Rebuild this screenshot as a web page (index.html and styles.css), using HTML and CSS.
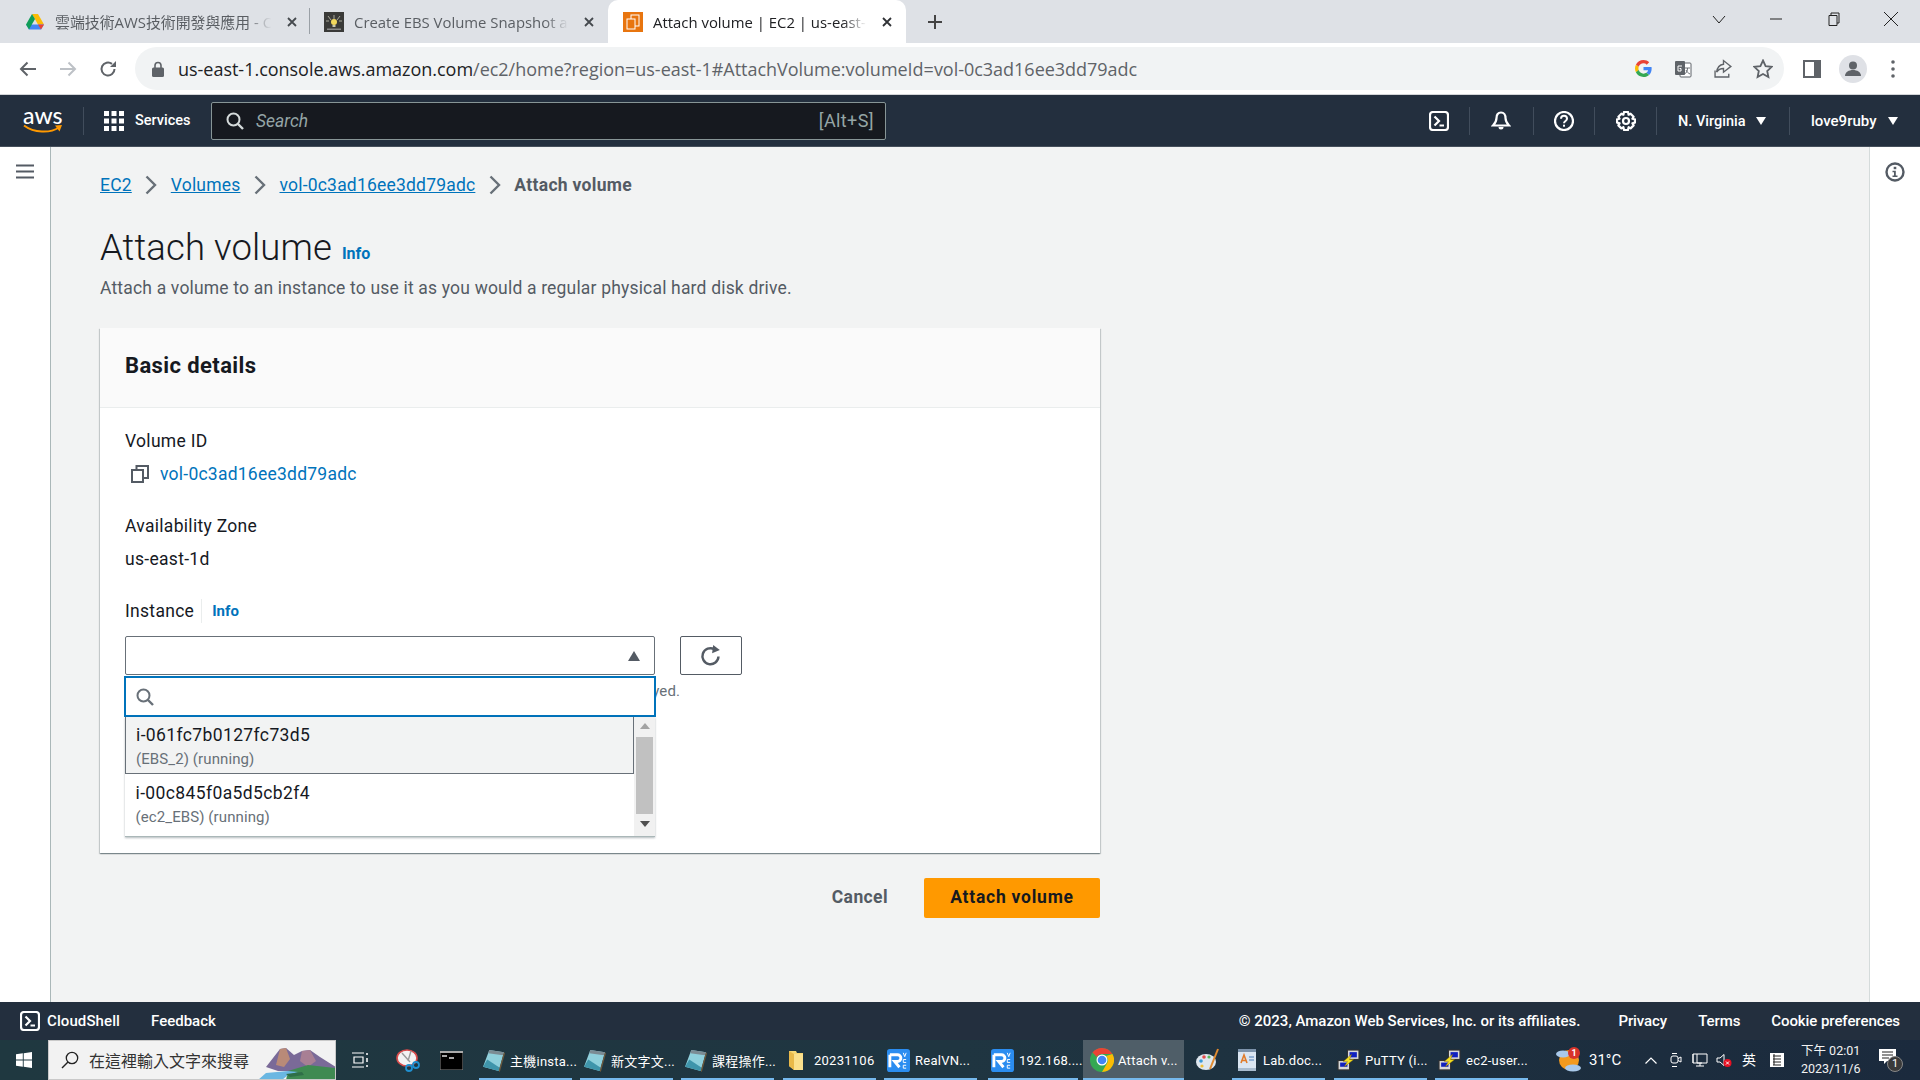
FILE: index.html
```html
<!DOCTYPE html>
<html lang="zh-Hant">
<head>
<meta charset="utf-8">
<title>Attach volume | EC2 | us-east-1</title>
<link rel="stylesheet" href="styles.css">
</head>
<body>
<svg class="defs">
  <symbol id="notepad" viewBox="0 0 22 22">
    <polygon points="7,1 21,3 16,21 1,17" fill="#8fd0dc"/>
    <polygon points="7,1 21,3 20,6 6,4" fill="#7c8c94"/>
    <polygon points="1,17 16,21 17,18 5,10" fill="#3f95ab"/>
    <polygon points="21,3 22,4 17,22 16,21" fill="#6f5a3c"/>
  </symbol>
  <symbol id="vnc" viewBox="0 0 24 24">
    <rect width="24" height="24" rx="3" fill="#2b8df0"/>
    <path d="M3 6h8a3.500 3.500 0 0 1 0 7H8l5 6M3 6v13" fill="none" stroke="#fff" stroke-width="3"/>
    <path d="M17 4l1.500 4 1.500-4M20 11h-3v3h3M20 17h-3v3h3" fill="none" stroke="#fff" stroke-width="1"/>
  </symbol>
  <symbol id="putty" viewBox="0 0 22 22">
    <rect x="10" y="1" width="11" height="9" fill="#d9d9d9" stroke="#333"/>
    <rect x="12" y="3" width="7" height="5" fill="#1020c0"/>
    <rect x="1" y="11" width="11" height="9" fill="#d9d9d9" stroke="#333"/>
    <rect x="3" y="13" width="7" height="4" fill="#1020c0"/>
    <polygon points="14,5 6,12 10,12 7,17 16,10 12,10" fill="#f5e020" stroke="#806000" stroke-width=".4"/>
  </symbol>
  <symbol id="shell" viewBox="0 0 20 20">
    <rect x="1" y="1" width="18" height="18" rx="3" fill="none" stroke="#fff" stroke-width="2.200"/>
    <path d="M5.500 5.500l4.500 4.500-4.500 4.500M10.500 14.500h4.500" fill="none" stroke="#fff" stroke-width="2.200"/>
  </symbol>
</svg>

<div class="tabstrip">
  <div class="tab tab-first">
    <svg class="favicon" viewBox="0 0 18 16"><polygon points="6,0 12,0 18,10.500 12,10.500" fill="#fbbc05"/><polygon points="3,15.500 0,10.500 18,10.500 15,15.500" fill="#4285f4"/><polygon points="6,0 9,5 3,15.500 0,10.500" fill="#0f9d58"/><polygon points="12,10.500 18,10.500 15,15.500" fill="#ea4335"/></svg>
    <span class="tab-title">雲端技術AWS技術開發與應用 - C</span>
    <svg class="tab-x" viewBox="0 0 10 10"><path d="M1 1l8 8M9 1l-8 8"/></svg>
  </div>
  <div class="tab-sep"></div>
  <div class="tab tab-second">
    <svg class="favicon fav-kb" viewBox="0 0 20 20"><rect width="20" height="20" fill="#3a3a38"/><path d="M10 3v4M4 4l3 4M16 4l-3 4M2 9h3M15 9h3" stroke="#a8a89a" stroke-width="1"/><circle cx="10" cy="10" r="3" fill="#f1d75c"/><rect x="8.500" y="13" width="3" height="2" fill="#c8c8b0"/><rect x="3" y="16.500" width="14" height="1.500" fill="#888"/></svg>
    <span class="tab-title">Create EBS Volume Snapshot a</span>
    <svg class="tab-x" viewBox="0 0 10 10"><path d="M1 1l8 8M9 1l-8 8"/></svg>
  </div>
  <div class="tab tab-active">
    <svg class="favicon fav-ec2" viewBox="0 0 20 20"><rect width="20" height="20" fill="#e8750f"/><rect x="8" y="3" width="8" height="11" fill="none" stroke="#fff" stroke-width="1"/><rect x="4" y="7" width="8" height="10" fill="#e8750f" stroke="#fff" stroke-width="1"/></svg>
    <span class="tab-title">Attach volume | EC2 | us-east-1</span>
    <svg class="tab-x tab-x-dark" viewBox="0 0 10 10"><path d="M1 1l8 8M9 1l-8 8"/></svg>
  </div>
  <svg class="newtab" viewBox="0 0 14 14"><path d="M7 0v14M0 7h14"/></svg>
  <div class="winctl">
    <svg class="win-ico" viewBox="0 0 14 14"><path d="M1 4l6 7 6-7"/></svg>
    <svg class="win-ico" viewBox="0 0 14 14"><path d="M1 7h12"/></svg>
    <svg class="win-ico" viewBox="0 0 14 14"><path d="M2 3.500h8v10H2zM4 3.500V1h8v10h-2"/></svg>
    <svg class="win-ico win-close" viewBox="0 0 14 14"><path d="M0 0l14 14M14 0L0 14"/></svg>
  </div>
</div>

<div class="toolbar">
  <svg class="tb-ico" viewBox="0 0 18 18"><path d="M17 9H2M8.500 2.500L2 9l6.500 6.500"/></svg>
  <svg class="tb-ico tb-dim" viewBox="0 0 18 18"><path d="M1 9h15M9.500 2.500L16 9l-6.500 6.500"/></svg>
  <svg class="tb-ico" viewBox="0 0 18 18"><path d="M15.500 9A6.500 6.500 0 1 1 13 3.900"/><path class="tb-fill" d="M17 1v6h-6z"/></svg>
  <div class="omnibox">
    <svg class="lock" viewBox="0 0 12 16"><path d="M3 7V4.500a3 3 0 0 1 6 0V7" fill="none" stroke="#5f6368" stroke-width="1.600"/><rect y="6.500" width="12" height="9.500" rx="1.500" fill="#5f6368"/></svg>
    <span class="url"><span class="url-host">us-east-1.console.aws.amazon.com</span>/ec2/home?region=us-east-1#AttachVolume:volumeId=vol-0c3ad16ee3dd79adc</span>
    <svg class="omni-g" viewBox="0 0 48 48"><path fill="#EA4335" d="M24 9.500c3.540 0 6.710 1.220 9.210 3.600l6.850-6.850C35.900 2.380 30.470 0 24 0 14.620 0 6.510 5.380 2.560 13.220l7.980 6.190C12.430 13.720 17.740 9.500 24 9.500z"/><path fill="#4285F4" d="M46.980 24.550c0-1.570-.15-3.090-.38-4.550H24v9.020h12.940c-.58 2.960-2.260 5.480-4.780 7.180l7.730 6c4.510-4.180 7.090-10.360 7.090-17.650z"/><path fill="#FBBC05" d="M10.530 28.590c-.48-1.450-.76-2.990-.76-4.590s.27-3.140.76-4.590l-7.980-6.190C.92 16.460 0 20.120 0 24c0 3.880.92 7.540 2.560 10.780l7.970-6.190z"/><path fill="#34A853" d="M24 48c6.480 0 11.930-2.130 15.890-5.810l-7.730-6c-2.150 1.450-4.920 2.300-8.160 2.300-6.260 0-11.570-4.220-13.470-9.910l-7.980 6.190C6.510 42.620 14.620 48 24 48z"/></svg>
    <svg class="omni-trans" viewBox="0 0 18 18"><rect x="6" y="3" width="11" height="14" rx="1" fill="#fff" stroke="#5f6368"/><rect x="1" y="1" width="10" height="14" rx="1" fill="#5f6368"/><path d="M8 6H4v5h3V8.500H5.500" fill="none" stroke="#fff"/><path d="M11 8h5M13.500 8c0 3-1 5-3 6M12 10c1 2 2 3 4 4" fill="none" stroke="#5f6368" stroke-width=".9"/></svg>
    <svg class="omni-share" viewBox="0 0 18 18"><path d="M9 5V1.500l7 5.500-7 5.500V9c-3 0-5 1-6.500 3.500C3 8.500 5 5.500 9 5zM1 11v6h13v-3"/></svg>
    <svg class="omni-star" viewBox="0 0 20 20"><path d="M10 1.500l2.600 5.600 6.100.7-4.500 4.200 1.200 6L10 15l-5.400 3 1.200-6L1.300 7.800l6.100-.7z"/></svg>
  </div>
  <svg class="side-panel" viewBox="0 0 18 18"><rect x="1" y="1" width="16" height="16" fill="none" stroke="#5f6368" stroke-width="2"/><rect x="11" y="1" width="6" height="16" fill="#5f6368"/></svg>
  <svg class="avatar" viewBox="0 0 28 28"><circle cx="14" cy="14" r="14" fill="#dfe1e6"/><circle cx="14" cy="10.500" r="4" fill="#5f6368"/><path d="M6 21c0-4 4-6 8-6s8 2 8 6z" fill="#5f6368"/></svg>
  <svg class="dots" viewBox="0 0 4 18"><circle cx="2" cy="2" r="1.800"/><circle cx="2" cy="9" r="1.800"/><circle cx="2" cy="16" r="1.800"/></svg>
</div>

<div class="nav">
  <div class="nav-logo">
    <span class="aws-text">aws</span>
    <svg class="aws-smile" viewBox="0 0 40 11"><path d="M1 1.500c10 7.500 26 8 35 2" fill="none" stroke="#f90" stroke-width="2"/><path d="M32 1.500l7-.5-2.500 6.500z" fill="#f90"/></svg>
  </div>
  <div class="nav-services">
    <svg class="grid-ico" viewBox="0 0 20 20"><g fill="#fff"><rect width="5" height="5"/><rect x="7.500" width="5" height="5"/><rect x="15" width="5" height="5"/><rect y="7.500" width="5" height="5"/><rect x="7.500" y="7.500" width="5" height="5"/><rect x="15" y="7.500" width="5" height="5"/><rect y="15" width="5" height="5"/><rect x="7.500" y="15" width="5" height="5"/><rect x="15" y="15" width="5" height="5"/></g></svg>
    <span class="services-label">Services</span>
  </div>
  <div class="nav-search">
    <svg class="search-ico" viewBox="0 0 18 18"><circle cx="7.500" cy="7.500" r="6" fill="none" stroke="#d5dbdb" stroke-width="2"/><path d="M12 12l5 5" stroke="#d5dbdb" stroke-width="2.400"/></svg>
    <span class="search-ph">Search</span>
    <span class="search-key">[Alt+S]</span>
  </div>
  <div class="nav-spacer"></div>
  <div class="nav-cell cell-a"><svg class="nav-ico" viewBox="0 0 20 20"><use href="#shell"/></svg></div>
  <div class="nav-cell cell-b"><svg class="nav-ico" viewBox="0 0 20 20"><path d="M10 1.500c-3 0-4.500 2.500-4.500 5.500 0 3.500-1 5-3.500 7.500h16c-2.500-2.500-3.500-4-3.500-7.500 0-3-1.500-5.500-4.500-5.500z" fill="none" stroke="#fff" stroke-width="2.200"/><path d="M7.500 16a2.500 2.500 0 0 0 5 0z" fill="#fff"/></svg></div>
  <div class="nav-cell cell-c"><svg class="nav-ico" viewBox="0 0 20 20"><circle cx="10" cy="10" r="9" fill="none" stroke="#fff" stroke-width="2.200"/><path d="M7 7.800c0-4 6-4 6 0 0 2.200-3 2.200-3 4.500" fill="none" stroke="#fff" stroke-width="2"/><rect x="9" y="13.700" width="2" height="2" fill="#fff"/></svg></div>
  <div class="nav-cell cell-d"><svg class="nav-ico" viewBox="0 0 20 20"><circle cx="10" cy="10" r="3" fill="none" stroke="#fff" stroke-width="2.200"/><path d="M8 1h4l.6 2.700 2-1 3 3-1.200 2L19 8.400v3.200l-2.600.7 1.200 2.100-3 3-2-1.200L12 19H8l-.6-2.800-2 1.200-3-3 1.200-2.100L1 11.600V8.400l2.600-.7-1.200-2 3-3 2 1z" fill="none" stroke="#fff" stroke-width="2.200" stroke-linejoin="round"/></svg></div>
  <div class="nav-text nav-region"><span>N. Virginia</span><i class="caret"></i></div>
  <div class="nav-text nav-user"><span>love9ruby</span><i class="caret"></i></div>
</div>

<div class="main">
  <aside class="rail rail-left">
    <svg class="burger" viewBox="0 0 18 15"><path d="M0 1.500h18M0 7.500h18M0 13.500h18"/></svg>
  </aside>
  <main class="content">
    <nav class="crumbs">
      <a class="link">EC2</a><svg class="chev" viewBox="0 0 12 20"><path d="M1.500 1.500L10 10l-8.500 8.500"/></svg>
      <a class="link">Volumes</a><svg class="chev" viewBox="0 0 12 20"><path d="M1.500 1.500L10 10l-8.500 8.500"/></svg>
      <a class="link">vol-0c3ad16ee3dd79adc</a><svg class="chev" viewBox="0 0 12 20"><path d="M1.500 1.500L10 10l-8.500 8.500"/></svg>
      <span class="crumb-now">Attach volume</span>
    </nav>
    <div class="title-row">
      <h1 class="title">Attach volume</h1><span class="info info-title">Info</span>
    </div>
    <p class="subtitle">Attach a volume to an instance to use it as you would a regular physical hard disk drive.</p>
    <section class="card">
      <header class="card-head"><h2 class="card-title">Basic details</h2></header>
      <div class="card-body">
        <div class="label">Volume ID</div>
        <div class="vol-row">
          <svg class="copy" viewBox="0 0 18 18"><rect x="1" y="5" width="11" height="12" fill="none" stroke="#545b64" stroke-width="2"/><path d="M5.500 4.500V1H17v12h-4.500" fill="none" stroke="#545b64" stroke-width="2"/></svg>
          <span class="vol-link">vol-0c3ad16ee3dd79adc</span>
        </div>
        <div class="label label-az">Availability Zone</div>
        <div class="value">us-east-1d</div>
        <div class="inst-head"><span class="label">Instance</span><span class="info info-inst">Info</span></div>
        <div class="field">
          <div class="field-row">
            <div class="select"><i class="caret-up"></i></div>
            <button class="refresh" type="button"><svg class="refresh-ico" viewBox="0 0 20 20"><path d="M16.800 10.500A7.300 7.300 0 1 1 13 3.800"/><path class="refresh-tip" d="M12 0l6 4.500L11 7.500z"/></svg></button>
          </div>
          <div class="hint">Only instances in the same Availability Zone as the selected volume are displayed.</div>
          <div class="dropdown">
            <div class="dd-search"><svg class="dd-mag" viewBox="0 0 18 18"><circle cx="7.500" cy="7.500" r="6" fill="none" stroke="#687078" stroke-width="2"/><path d="M12 12l5 5" stroke="#687078" stroke-width="2.400"/></svg></div>
            <div class="dd-list">
              <div class="dd-options">
                <div class="opt opt-hover"><div class="opt-id">i-061fc7b0127fc73d5</div><div class="opt-sub">(EBS_2) (running)</div></div>
                <div class="opt"><div class="opt-id">i-00c845f0a5d5cb2f4</div><div class="opt-sub">(ec2_EBS) (running)</div></div>
              </div>
              <div class="scroll">
                <i class="sc-up"></i>
                <i class="sc-thumb"></i>
                <i class="sc-down"></i>
              </div>
            </div>
          </div>
        </div>
      </div>
    </section>
    <div class="actions">
      <span class="cancel">Cancel</span>
      <button class="primary" type="button">Attach volume</button>
    </div>
  </main>
  <aside class="rail rail-right">
    <svg class="info-ico" viewBox="0 0 20 20"><circle cx="10" cy="10" r="8.500" fill="none" stroke="#545b64" stroke-width="2.400"/><rect x="8.700" y="4.800" width="2.600" height="2.400" fill="#545b64"/><path d="M7.500 8.800h3.300v4.700h1.700v1.500h-5v-1.500h1.500v-3.200H7.500z" fill="#545b64"/></svg>
  </aside>
</div>

<footer class="foot">
  <svg class="foot-shell" viewBox="0 0 20 20"><use href="#shell"/></svg>
  <span class="foot-cs">CloudShell</span>
  <span class="foot-fb">Feedback</span>
  <span class="foot-copy">© 2023, Amazon Web Services, Inc. or its affiliates.</span>
  <span class="foot-pr">Privacy</span>
  <span class="foot-te">Terms</span>
  <span class="foot-co">Cookie preferences</span>
</footer>

<div class="taskbar">
  <div class="tk-start">
    <svg class="tk-win" viewBox="0 0 16 16"><path d="M0 2.300l6.800-1v6.300H0zM7.700 1.200L16 0v7.600H7.700zM0 8.400h6.800v6.300l-6.800-1zM7.700 8.400H16V16l-8.300-1.200z" fill="#fff"/></svg>
  </div>
  <div class="tk-search">
    <svg class="tk-mag" viewBox="0 0 18 18"><circle cx="11" cy="7" r="5.700" fill="none" stroke="#222" stroke-width="1.300"/><path d="M7 11l-6 6" stroke="#222" stroke-width="1.500"/></svg>
    <span class="tk-search-text">在這裡輸入文字來搜尋</span>
    <svg class="tk-scene" viewBox="0 0 78 39" preserveAspectRatio="none">
      <polygon points="8,26 22,8 28,7 36,14 44,10 52,9 62,16 78,26 78,30 20,30" fill="#7a6a98"/>
      <polygon points="22,8 28,7 32,18 26,26 18,24" fill="#b98a78"/>
      <polygon points="44,10 52,9 58,20 50,26 42,20" fill="#a87f94"/>
      <polygon points="30,30 50,24 78,27 78,39 28,39" fill="#3f8a52"/>
      <polygon points="0,39 8,32 30,30 40,31 30,34 24,39" fill="#6ab7e2"/>
      <polygon points="28,33 44,31 46,34 32,36" fill="#2f6f48"/>
    </svg>
  </div>
  <div class="tk-icon"><svg class="ti-view" viewBox="0 0 16 16"><path d="M0 1h12M0 15h12M2 5h9v6H2z" fill="none" stroke="#fff" stroke-width="1.200"/><path d="M15 1v2M15 6v4M15 13v2" stroke="#fff" stroke-width="1.500"/></svg></div>
  <div class="tk-icon"><svg class="ti-snip" viewBox="0 0 24 24"><ellipse cx="11" cy="10" rx="10" ry="8" fill="#f3f3f3" stroke="#d94b4b" stroke-width="1.600"/><path d="M15 3l-3 10M6 5l8 9" stroke="#9a9a9a" stroke-width="1.400"/><circle cx="13" cy="20" r="3" fill="none" stroke="#1f8fd0" stroke-width="1.800"/><circle cx="20" cy="17" r="3" fill="none" stroke="#1f8fd0" stroke-width="1.800"/></svg></div>
  <div class="tk-icon tk-cmd"><svg class="ti-cmd" viewBox="0 0 23 19"><rect width="23" height="19" fill="#000" stroke="#888"/><rect y="0" width="23" height="2" fill="#aaa"/><path d="M2 5h5M9 7h5" stroke="#ddd" stroke-width="1.500"/></svg></div>
  <div class="tk-btn"><svg class="ti-app" viewBox="0 0 22 22"><use href="#notepad"/></svg><span class="tk-label">主機insta...</span></div>
  <div class="tk-btn"><svg class="ti-app" viewBox="0 0 22 22"><use href="#notepad"/></svg><span class="tk-label">新文字文...</span></div>
  <div class="tk-btn"><svg class="ti-app" viewBox="0 0 22 22"><use href="#notepad"/></svg><span class="tk-label">課程操作...</span></div>
  <div class="tk-btn tk-folder"><svg class="ti-folder" viewBox="0 0 15 20"><path d="M0 1h7l1 2h6v17H5L0 16z" fill="#f7d774"/><path d="M5 4h9v16H5z" fill="#fbe08c"/><path d="M0 1l5 3v16l-5-4z" fill="#e9b949"/></svg><span class="tk-label">20231106</span></div>
  <div class="tk-btn"><svg class="ti-app" viewBox="0 0 24 24"><use href="#vnc"/></svg><span class="tk-label">RealVN...</span></div>
  <div class="tk-btn tk-vnc2"><svg class="ti-app" viewBox="0 0 24 24"><use href="#vnc"/></svg><span class="tk-label">192.168....</span></div>
  <div class="tk-btn tk-chrome">
    <svg class="ti-chrome" viewBox="0 0 24 24"><circle cx="12" cy="12" r="12" fill="#34a853"/><path d="M12 0a12 12 0 0 1 10.400 6H12a6 6 0 0 0-5.200 3L2.500 4.500A12 12 0 0 1 12 0z" fill="#ea4335"/><path d="M22.400 6A12 12 0 0 1 12 24l5.200-9A6 6 0 0 0 16 8z" fill="#fbbc05"/><circle cx="12" cy="12" r="5.500" fill="#fff"/><circle cx="12" cy="12" r="4.300" fill="#4285f4"/></svg>
    <span class="tk-label">Attach v...</span>
  </div>
  <div class="tk-icon"><svg class="ti-paint" viewBox="0 0 24 24"><ellipse cx="10" cy="14" rx="10" ry="8" fill="#dfe7ef"/><circle cx="5" cy="13" r="1.800" fill="#3a9ad9"/><circle cx="8" cy="9" r="1.800" fill="#e34d4d"/><circle cx="13" cy="9" r="1.600" fill="#5cb85c"/><circle cx="6" cy="18" r="1.600" fill="#f2c037"/><path d="M22 1l-8 20" stroke="#e08a2e" stroke-width="2"/></svg></div>
  <div class="tk-btn tk-lab"><svg class="ti-lab" viewBox="0 0 18 24"><rect y="1" width="18" height="22" fill="#dbe6f2"/><rect y="1" width="18" height="3" fill="#7c93ab"/><rect y="20" width="18" height="3" fill="#a9bccf"/><path d="M3 15l3-8 3 8M4 12.500h4" fill="none" stroke="#e07b2a" stroke-width="1.600"/><path d="M11 9h5M11 12h5" stroke="#4a7db8" stroke-width="1.200"/></svg><span class="tk-label">Lab.doc...</span></div>
  <div class="tk-btn"><svg class="ti-app" viewBox="0 0 22 22"><use href="#putty"/></svg><span class="tk-label">PuTTY (i...</span></div>
  <div class="tk-btn"><svg class="ti-app" viewBox="0 0 22 22"><use href="#putty"/></svg><span class="tk-label">ec2-user...</span></div>
  <div class="tray">
    <div class="tr-weather">
      <svg class="tr-sun" viewBox="0 0 26 26"><circle cx="13" cy="13" r="10" fill="#f39a1e"/><ellipse cx="7" cy="7" rx="7" ry="3.500" fill="#a9c9ea"/><ellipse cx="17" cy="21" rx="8" ry="3.500" fill="#a9c9ea"/><circle cx="18" cy="6" r="6" fill="#d8342a"/></svg>
      <span class="tr-badge">1</span>
    </div>
    <span class="tr-temp">31°C</span>
    <svg class="tr-chev" viewBox="0 0 12 7"><path d="M.5 6.500L6 1l5.500 5.500"/></svg>
    <svg class="tr-meet" viewBox="0 0 12 16"><rect x="1" y="4" width="7" height="7" rx="2" fill="none" stroke="#fff"/><path d="M8 6.500l3-1.500v5l-3-1.500M2 1.500h5M2 14.500h5" fill="none" stroke="#fff"/></svg>
    <svg class="tr-net" viewBox="0 0 16 14"><path d="M1 1h14v9H1zM1 1v9M5 1v9h5M8 10v3M4 13h8" fill="none" stroke="#fff"/></svg>
    <span class="tr-sound"><svg class="tr-spk" viewBox="0 0 16 14"><path d="M1 5h3l4-3.500v11L4 9H1z" fill="none" stroke="#fff"/><circle cx="11.500" cy="10" r="4" fill="#e81123"/><path d="M10 8.500l3 3M13 8.500l-3 3" stroke="#fff"/></svg></span>
    <span class="tr-ime">英</span>
    <svg class="tr-kb" viewBox="0 0 14 14"><rect width="14" height="14" fill="#fff"/><path d="M3 3h8M3 6h8M3 9h8M3 12h8M4 1v11" stroke="#222" stroke-width="1"/></svg>
    <div class="tr-clock"><div>下午 02:01</div><div>2023/11/6</div></div>
    <div class="tr-note">
      <svg class="tr-msg" viewBox="0 0 17 16"><path d="M0 0h17v12H8l-3 3v-3H0z" fill="#fff"/><path d="M3 3h11M3 6h11M3 9h7" stroke="#222"/></svg>
      <span class="tr-count">1</span>
    </div>
  </div>
</div>
</body>
</html>
```

FILE: styles.css
```css
* { box-sizing: border-box; }
html, body { margin: 0; height: 1080px; overflow: hidden; }
body {
  width: 1920px;
  display: flex;
  flex-direction: column;
  font-family: Roboto, "Noto Sans CJK TC", sans-serif;
  color: #16191f;
  background: #f2f3f3;
}
.defs { display: none; }

/* chrome tab strip */
.tabstrip { height: 43px; background: #dee1e6; display: flex; align-items: stretch; flex: none; }
.tab {
  width: 298px; display: flex; align-items: center; flex: none;
  font: 14.9px "Open Sans", "Noto Sans CJK TC", sans-serif; color: #5a5e63;
}
.tab-first { margin-left: 11px; padding-left: 15px; padding-right: 12px; }
.tab-sep { width: 1px; height: 26px; background: #9aa0a6; margin-top: 8px; flex: none; }
.tab-second { padding-left: 14px; padding-right: 14px; }
.tab-active { background: #fff; color: #202124; padding-left: 15px; padding-right: 14px; border-radius: 10px 10px 0 0; }
.favicon { width: 18px; height: 16px; flex: none; margin-right: 11px; }
.fav-kb, .fav-ec2 { width: 20px; height: 20px; margin-right: 10px; }
.tab-title {
  flex: 1; min-width: 0; white-space: nowrap;
  -webkit-mask-image: linear-gradient(to right, #000 87%, transparent 98%);
  mask-image: linear-gradient(to right, #000 87%, transparent 98%);
}
.tab-x { width: 10px; height: 10px; flex: none; margin-left: 11px; fill: none; stroke: #45494e; stroke-width: 1.800; }
.tab-x-dark { stroke: #303236; }
.newtab { width: 14px; height: 14px; margin-left: 22px; align-self: center; fill: none; stroke: #444; stroke-width: 2; flex: none; }
.winctl { margin-left: auto; display: flex; align-items: center; height: 37px; padding-right: 22px; gap: 43.5px; }
.win-ico { width: 14px; height: 14px; fill: none; stroke: #222; stroke-width: 1; }
.win-close { width: 14px; height: 14px; }

/* chrome toolbar */
.toolbar { height: 52px; background: #fff; border-bottom: 1px solid #d3d5d8; display: flex; align-items: center; flex: none; padding-left: 19px; }
.tb-ico { width: 18px; height: 18px; margin-right: 22px; fill: none; stroke: #5f6368; stroke-width: 2; flex: none; }
.tb-dim { stroke: #bdc1c6; }
.tb-fill { fill: #5f6368; stroke: none; }
.omnibox {
  width: 1649px; height: 43px; margin-left: -4px; background: #f1f3f4; border-radius: 22px;
  display: flex; align-items: center; padding-left: 17px; flex: none;
}
.lock { width: 12px; height: 16px; flex: none; }
.url { margin-left: 14px; font: 18px "Open Sans", sans-serif; letter-spacing: -.02px; color: #5f6368; white-space: nowrap; flex: none; width: 1456.5px; }
.url-host { color: #202124; }
.omni-g { width: 17px; height: 17px; flex: none; }
.omni-trans { width: 18px; height: 18px; flex: none; margin-left: 22.5px; }
.omni-share { width: 19px; height: 19px; flex: none; margin-left: 22px; fill: none; stroke: #5f6368; stroke-width: 1.300; }
.omni-star { width: 20px; height: 20px; flex: none; margin-left: 20px; fill: none; stroke: #5f6368; stroke-width: 1.800; }
.side-panel { width: 18px; height: 18px; margin-left: 19px; flex: none; }
.avatar { width: 28px; height: 28px; margin-left: 18px; flex: none; }
.dots { width: 4px; height: 18px; margin-left: 24px; fill: #5f6368; flex: none; }

/* aws nav */
.nav { height: 52px; background: #232f3e; border-bottom: 1px solid #454f5b; display: flex; align-items: center; flex: none; color: #fff; }
.nav-logo { width: 84px; height: 28px; border-right: 1px solid #414d5c; padding-left: 23px; display: flex; flex-direction: column; flex: none; }
.aws-text { font: 500 23px/17px Lato, sans-serif; color: #fff; height: 18px; }
.aws-smile { width: 40px; height: 11px; margin-top: -1px; }
.nav-services { width: 127px; display: flex; align-items: center; padding-left: 20px; flex: none; }
.grid-ico { width: 20px; height: 20px; flex: none; }
.services-label { margin-left: 11px; font: 500 14.5px Roboto, sans-serif; }
.nav-search {
  width: 675px; height: 38px; background: #16191f; border: 1px solid #879596; border-radius: 2px;
  display: flex; align-items: center; padding: 0 11px 0 14px; flex: none;
}
.search-ico { width: 18px; height: 18px; flex: none; }
.search-ph { margin-left: 12px; font: italic 17.5px Roboto, sans-serif; color: #95a5a6; }
.search-key { margin-left: auto; font: 18px Roboto, sans-serif; letter-spacing: .4px; color: #95a5a6; }
.nav-spacer { flex: 1; }
.nav-cell { height: 28px; border-right: 1px solid #414d5c; display: flex; align-items: center; justify-content: center; flex: none; }
.cell-a { width: 61px; }
.cell-b { width: 64px; padding-right: 2px; }
.cell-c { width: 61px; }
.cell-d { width: 62px; }
.nav-ico { width: 20px; height: 20px; }
.nav-text { height: 28px; display: flex; align-items: center; font: 500 14.5px Roboto, sans-serif; flex: none; padding: 1px 0 0 21px; }
.nav-region { width: 133px; border-right: 1px solid #414d5c; }
.nav-user { width: 130px; font-size: 15px; }
.caret { width: 0; height: 0; border-left: 5.5px solid transparent; border-right: 5.5px solid transparent; border-top: 8px solid #fff; margin-left: 11px; }
.nav-user .caret { margin-left: 12px; }

/* main */
.main { flex: 1; min-height: 0; display: flex; }
.rail { width: 51px; background: #fff; flex: none; }
.rail-left { border-right: 1px solid #aab7b8; padding: 17px 0 0 16px; }
.rail-right { border-left: 1px solid #d5dbdb; padding: 15px 0 0 15px; }
.burger { width: 18px; height: 15px; display: block; fill: none; stroke: #545b64; stroke-width: 2.200; }
.info-ico { width: 20px; height: 20px; display: block; }
.content { flex: 1; padding: 24px 0 0 49px; min-width: 0; }
.crumbs { height: 28px; display: flex; align-items: center; font-size: 17.5px; letter-spacing: .2px; }
.link { color: #0073bb; text-decoration: underline; }
.chev { width: 12px; height: 20px; margin: 0 13.5px; fill: none; stroke: #687078; stroke-width: 2.400; flex: none; }
.crumb-now { color: #545b64; font-weight: 700; letter-spacing: .3px; }
.title-row { margin-top: 24px; height: 48px; display: flex; align-items: center; }
.title { margin: 0; font: 300 36.5px Roboto, sans-serif; letter-spacing: .1px; color: #16191f; }
.info { color: #0073bb; font-weight: 700; font-size: 15px; }
.info-title { margin-left: 10px; margin-top: 13px; font-size: 16px; }
.subtitle { margin: 4px 0 0; font-size: 17.5px; line-height: 26px; letter-spacing: .18px; color: #545b64; height: 26px; }
.card { margin-top: 27px; width: 1000px; background: #fff; box-shadow: 0 1px 1px 0 rgba(0,28,36,.3), 1px 1px 1px 0 rgba(0,28,36,.15), -1px 1px 1px 0 rgba(0,28,36,.15); }
.card-head { height: 80px; background: #fafafa; border-bottom: 1px solid #eaeded; padding: 21px 25px 0; }
.card-title { margin: 0; font: 700 22px/34px Roboto, sans-serif; letter-spacing: .4px; }
.card-body { padding: 19px 25px 0; height: 445px; font-size: 17.5px; }
.label { line-height: 28px; height: 28px; color: #16191f; letter-spacing: .3px; }
.vol-row { display: flex; align-items: center; margin-top: 5px; height: 28px; padding-left: 6px; }
.copy { width: 18px; height: 18px; flex: none; }
.vol-link { color: #0073bb; margin-left: 11px; letter-spacing: .24px; }
.label-az { margin-top: 24px; }
.value { margin-top: 5px; line-height: 28px; height: 28px; letter-spacing: .3px; }
.inst-head { margin-top: 24px; display: flex; align-items: center; height: 28px; }
.info-inst { margin-left: 7px; padding-left: 10px; border-left: 1px solid #eaeded; line-height: 24px; }
.field { position: relative; margin-top: 11px; }
.field-row { display: flex; gap: 25px; height: 39px; }
.select { width: 530px; height: 39px; border: 1px solid #687078; border-radius: 2px; background: #fff; display: flex; align-items: center; justify-content: flex-end; padding-right: 14px; }
.caret-up { width: 0; height: 0; border-left: 6.5px solid transparent; border-right: 6.5px solid transparent; border-bottom: 10px solid #545b64; }
.refresh { width: 62px; height: 39px; border: 1px solid #545b64; border-radius: 2px; background: #fff; padding: 0; display: flex; align-items: center; justify-content: center; }
.refresh-ico { width: 22px; height: 22px; fill: none; stroke: #545b64; stroke-width: 2.200; }
.refresh-tip { fill: #545b64; stroke: none; }
.hint { margin-top: 6px; font-size: 15px; line-height: 20px; letter-spacing: .13px; color: #687078; white-space: nowrap; width: 556px; }
.dropdown { position: absolute; top: 40px; left: -1px; width: 532px; }
.dd-search { height: 41px; border: 2px solid #0073bb; background: #fff; display: flex; align-items: center; padding-left: 10px; }
.dd-mag { width: 18px; height: 18px; }
.dd-list { display: flex; margin: 0 1px; height: 120px; background: #fff; border-bottom: 1px solid #aab7b8; box-shadow: 0 1px 2px rgba(0,28,36,.3); }
.dd-options { flex: 1; min-width: 0; }
.opt { height: 60px; padding: 5px 0 0 10.5px; border: 1px solid transparent; border-left: 0; border-right: 0; }
.opt-hover { height: 57px; background: #f2f3f3; border: 1px solid #687078; border-top: 0; padding-top: 6px; padding-left: 10px; margin-bottom: 1px; }
.opt-id { font-size: 17.5px; line-height: 24px; letter-spacing: .38px; }
.opt-sub { font-size: 15px; line-height: 24px; letter-spacing: .1px; color: #687078; }
.scroll { width: 21px; flex: none; background: #f1f1f1; display: flex; flex-direction: column; align-items: center; padding: 6px 0 6px; }
.sc-up { width: 0; height: 0; border-left: 5px solid transparent; border-right: 5px solid transparent; border-bottom: 6px solid #a3a3a3; }
.sc-thumb { width: 17px; height: 77px; background: #c1c1c1; margin-top: 8px; }
.sc-down { width: 0; height: 0; border-left: 5px solid transparent; border-right: 5px solid transparent; border-top: 6px solid #505050; margin-top: 7px; }

.actions { width: 1000px; margin-top: 25px; display: flex; justify-content: flex-end; align-items: center; }
.cancel { font-weight: 700; font-size: 17.5px; letter-spacing: .4px; color: #545b64; margin: 0 36px 2px 0; }
.primary { width: 176px; height: 40px; border: 0; padding: 0 0 2px; background: #ff9900; color: #16191f; font: 700 17.5px Roboto, sans-serif; letter-spacing: .75px; border-radius: 2px; }

/* footer */
.foot { height: 38px; background: #232f3e; color: #fff; display: flex; align-items: center; font: 500 15px Roboto, sans-serif; flex: none; padding-left: 20px; }
.foot-shell { width: 20px; height: 20px; flex: none; }
.foot-cs { margin-left: 7px; letter-spacing: .1px; }
.foot-fb { margin-left: 31px; }
.foot-copy { margin-left: auto; }
.foot-pr { margin-left: 38px; letter-spacing: -.08px; }
.foot-te { margin-left: 31px; letter-spacing: -.08px; }
.foot-co { margin-left: 31px; margin-right: 20px; letter-spacing: -.08px; }

/* taskbar */
.taskbar { height: 40px; background: linear-gradient(to right, #1f3840, #1f3541 50%, #1b2a3d); display: flex; align-items: stretch; flex: none; color: #fff; font: 13px Roboto, "Noto Sans CJK TC", sans-serif; letter-spacing: .25px; }
.tk-start { width: 48px; display: flex; align-items: center; justify-content: center; flex: none; }
.tk-win { width: 16px; height: 16px; }
.tk-search { width: 288px; flex: none; background: #f2f2f2; border: 1px solid #c9c9c9; display: flex; align-items: center; color: #333; padding-left: 12px; overflow: hidden; letter-spacing: 0; }
.tk-mag { width: 18px; height: 18px; flex: none; }
.tk-search-text { margin-left: 10px; font: 16px "Noto Sans CJK TC", sans-serif; white-space: nowrap; width: 169px; flex: none; }
.tk-scene { width: 78px; height: 39px; flex: none; }
.tk-icon { width: 48px; flex: none; display: flex; align-items: center; justify-content: center; }
.tk-cmd { width: 39px; }
.ti-view { width: 16px; height: 16px; }
.ti-snip { width: 24px; height: 24px; }
.ti-cmd { width: 23px; height: 19px; }
.ti-paint { width: 24px; height: 24px; }
.tk-btn { width: 93px; margin-left: 8px; flex: none; display: flex; align-items: center; border-bottom: 2px solid #76b9ed; white-space: nowrap; padding-top: 2px; }
.ti-app { width: 23px; height: 23px; flex: none; margin: 0 5px 0 3px; }
.tk-folder { margin-left: 9px; }
.tk-folder .ti-folder { width: 15px; height: 20px; flex: none; margin: 0 10px 0 6px; }
.tk-vnc2 { width: 90px; margin-left: 11px; }
.tk-chrome { width: 101px; margin-left: 5px; background: #4f5e68; }
.ti-chrome { width: 24px; height: 24px; flex: none; margin: 0 4px 0 7px; }
.tk-lab { margin-left: 0; }
.ti-lab { width: 18px; height: 24px; flex: none; margin: 0 7px 0 6px; }
.tk-lab + .tk-btn { margin-left: 9px; }
.tk-label { flex: none; }
.tray { margin-left: 28px; display: flex; align-items: center; flex: 1; min-width: 0; letter-spacing: 0; }
.tr-weather { position: relative; width: 26px; height: 26px; flex: none; }
.tr-sun { width: 26px; height: 26px; display: block; }
.tr-badge { position: absolute; top: 0; right: 2px; font-size: 9px; line-height: 12px; width: 12px; text-align: center; font-weight: 700; }
.tr-temp { margin-left: 7px; font-size: 15px; width: 56px; flex: none; }
.tr-chev { width: 12px; height: 7px; fill: none; stroke: #fff; stroke-width: 1.200; flex: none; }
.tr-meet { width: 12px; height: 16px; margin-left: 13px; flex: none; }
.tr-net { width: 16px; height: 14px; margin-left: 10px; flex: none; }
.tr-sound { margin-left: 8px; flex: none; display: flex; }
.tr-spk { width: 16px; height: 14px; }
.tr-ime { margin-left: 10px; font-size: 14px; width: 15px; flex: none; line-height: 20px; }
.tr-kb { width: 14px; height: 14px; margin-left: 13px; flex: none; }
.tr-clock { margin-left: 17px; font-size: 12.5px; line-height: 18px; width: 68px; flex: none; white-space: nowrap; color: #f2f2f2; }
.tr-note { position: relative; width: 20px; height: 22px; margin-left: 10px; flex: none; }
.tr-msg { width: 17px; height: 16px; display: block; }
.tr-count { position: absolute; left: 8px; top: 7px; width: 16px; height: 16px; border-radius: 50%; background: #3a3a3a; border: 1px solid #888; font-size: 11px; line-height: 14px; text-align: center; }
```
